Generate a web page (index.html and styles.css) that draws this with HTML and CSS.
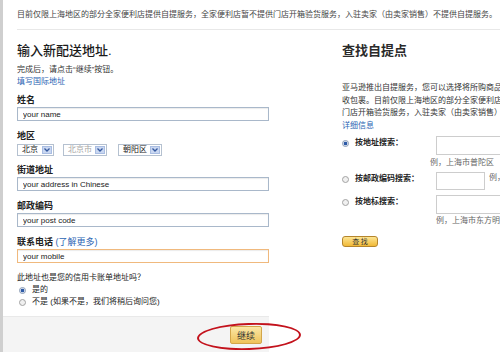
FILE: index.html
```html
<!DOCTYPE html>
<html lang="zh-CN">
  <head>
    <meta charset="UTF-8" />
    <meta name="viewport" content="width=device-width, initial-scale=1.0" />
    <title>输入新配送地址</title>
    <link rel="stylesheet" href="styles.css">
  </head>
  <body>
    <div class="page">
      <p class="notice">目前仅限上海地区的部分全家便利店提供自提服务，全家便利店暂不提供门店开箱验货服务，入驻卖家（由卖家销售）不提供自提服务。</p>

      <div class="columns">
        <!-- new address form -->
        <form class="address">
          <h2 class="title">输入新配送地址.</h2>
          <p class="address__hint">完成后，请点击“继续”按钮。</p>
          <a href="#" class="link">填写国际地址</a>

          <div class="field field--first">
            <label class="label">姓名</label>
            <input class="input" type="text" value="your name" />
          </div>

          <div class="field">
            <label class="label">地区</label>
            <div class="selects">
              <div class="select select--short">
                <span>北京</span>
                <span class="select__arrow"><svg width="6" height="4" viewBox="0 0 6 4"><path d="M0.5 0.5 L3 3 L5.5 0.5" fill="none" stroke="#34589e" stroke-width="1.3"/></svg></span>
              </div>
              <div class="select select--disabled">
                <span>北京市</span>
                <span class="select__arrow"><svg width="6" height="4" viewBox="0 0 6 4"><path d="M0.5 0.5 L3 3 L5.5 0.5" fill="none" stroke="#34589e" stroke-width="1.3"/></svg></span>
              </div>
              <div class="select">
                <span>朝阳区</span>
                <span class="select__arrow"><svg width="6" height="4" viewBox="0 0 6 4"><path d="M0.5 0.5 L3 3 L5.5 0.5" fill="none" stroke="#34589e" stroke-width="1.3"/></svg></span>
              </div>
            </div>
          </div>

          <div class="field field--after-select">
            <label class="label">街道地址</label>
            <input class="input" type="text" value="your address in Chinese" />
          </div>

          <div class="field">
            <label class="label">邮政编码</label>
            <input class="input" type="text" value="your post code" />
          </div>

          <div class="field">
            <label class="label">联系电话 <a href="#" class="link link--plain">(了解更多)</a></label>
            <input class="input input--active" type="text" value="your mobile" />
          </div>

          <p class="question">此地址也是您的信用卡账单地址吗？</p>
          <label class="choice"><input type="radio" name="billing" class="radio" checked /> 是的</label>
          <label class="choice"><input type="radio" name="billing" class="radio" /> 不是 (如果不是，我们将稍后询问您)</label>

          <div class="address__footer">
            <button type="button" class="btn-continue">继续</button>
            <span class="mark"></span>
          </div>
        </form>

        <!-- pickup point search -->
        <section class="pickup">
          <h2 class="title title--bold">查找自提点</h2>
          <p class="pickup__text">亚马逊推出自提服务，您可以选择将所购商品送至指定便利店，然后在店内自行签收包裹。目前仅限上海地区的部分全家便利店提供自提服务，全家便利店暂不提供门店开箱验货服务，入驻卖家（由卖家销售）不提供自提服务。<br /><a href="#" class="link">详细信息</a></p>

          <div class="search">
            <div class="search__row">
              <label class="search__option"><input type="radio" name="search" class="radio" checked /> 按地址搜索：</label>
              <div class="search__field">
                <input class="search__input" type="text" />
                <p class="search__example search__example--shift">例，上海市普陀区</p>
              </div>
            </div>
            <div class="search__row search__row--post">
              <label class="search__option"><input type="radio" name="search" class="radio" /> 按邮政编码搜索：</label>
              <div class="search__field search__field--inline">
                <input class="search__input search__input--short" type="text" />
                <span class="search__example">例，</span>
              </div>
            </div>
            <div class="search__row search__row--landmark">
              <label class="search__option"><input type="radio" name="search" class="radio" /> 按地标搜索：</label>
              <div class="search__field">
                <input class="search__input" type="text" />
                <p class="search__example search__example--tight">例，上海市东方明</p>
              </div>
            </div>
          </div>

          <button type="button" class="btn-find">查 找</button>
        </section>
      </div>
    </div>
  </body>
</html>
```

FILE: styles.css
```css
* {
  margin: 0;
  padding: 0;
  box-sizing: border-box;
}

html,
body {
  height: 100%;
  overflow: hidden;
}

body {
  color: #333;
  background-color: #fff;
  font-family: "Liberation Sans", "Noto Sans CJK SC", sans-serif;
  font-size: 8px;
  line-height: 12px;
}

.page {
  min-height: 100%;
  border-left: 3px solid #cfcfcf;
  padding-left: 14px;
}

.notice {
  padding-top: 9px;
  padding-bottom: 8px;
  border-bottom: 1px solid #e8e8e8;
  white-space: nowrap;
  color: #444;
}

.columns {
  display: flex;
  gap: 73px;
  margin-top: 13px;
}

.title {
  font-size: 13px;
  line-height: 16px;
  font-weight: 500;
  color: #1a1a1a;
}
.title--bold {
  font-weight: bold;
  color: #2a2a2a;
}

.link {
  color: #2b64b3;
  text-decoration: none;
}

/* ***** left column ***** */

.address {
  flex: none;
  width: 252px;
}
.address__hint {
  margin-top: 5px;
}

.field {
  margin-top: 9px;
}
.field--first {
  margin-top: 6px;
}
.field--after-select {
  margin-top: 8px;
}
.label {
  display: block;
  font-size: 9px;
  line-height: 12px;
  font-weight: bold;
  color: #222;
}
.link--plain {
  font-weight: normal;
}
.input {
  display: block;
  width: 100%;
  height: 14px;
  margin-top: 1px;
  padding: 0 5px;
  border: 1px solid #a9b8ca;
  box-shadow: inset 0 1px 1px rgba(0, 0, 0, 0.08);
  font-family: "Liberation Sans", sans-serif;
  font-size: 8px;
  color: #222;
  outline: none;
}
.input--active {
  border-color: #f0b97d;
}

.selects {
  display: flex;
  margin-top: 2px;
}
.select {
  display: flex;
  align-items: center;
  justify-content: space-between;
  width: 44px;
  height: 12px;
  margin-right: 11px;
  padding: 0 1px 0 4px;
  border: 1px solid #b5c1d0;
  color: #222;
}
.select--short {
  width: 37px;
  margin-right: 9px;
}
.select--disabled {
  color: #a6a6a6;
}
.select__arrow {
  display: flex;
  align-items: center;
  justify-content: center;
  width: 10px;
  height: 8px;
  background-color: #c9d7f1;
  border: 1px solid #a9bde2;
}

.question {
  margin-top: 9px;
  color: #222;
}
.choice {
  display: flex;
  align-items: center;
  gap: 6px;
  padding-left: 2px;
  color: #222;
}
.radio {
  appearance: none;
  flex: none;
  width: 7px;
  height: 7px;
  border: 1px solid #a3a3a3;
  border-radius: 50%;
  background-color: #f0f0f0;
}
.radio:checked {
  border-color: #8a9bb5;
  background: radial-gradient(circle, #2d5aa6 0 1.6px, #e6ecf6 2.1px);
}

.address__footer {
  position: relative;
  display: flex;
  justify-content: flex-end;
  align-items: flex-start;
  height: 40px;
  margin-top: 8px;
  margin-left: -14px;
  padding: 9px 7px 0 0;
  background-color: #f4f4f4;
  border-top: 1px solid #e9e9e9;
}
.btn-continue {
  width: 32px;
  height: 18px;
  border: 1px solid #d3a64a;
  border-radius: 2px;
  background: linear-gradient(#fbe7a6, #efc35a);
  font-family: "Noto Sans CJK SC", sans-serif;
  font-size: 9px;
  color: #333;
}
.mark {
  position: absolute;
  left: 194px;
  top: 6px;
  width: 104px;
  height: 27px;
  border: 2px solid #c3121c;
  border-radius: 50%;
  transform: rotate(-2deg);
  pointer-events: none;
}

/* ***** right column ***** */

.pickup {
  flex: none;
  width: 290px;
}
.pickup__text {
  margin-top: 23px;
  line-height: 12.5px;
  color: #333;
}

.search {
  margin-top: 4px;
}
.search__row {
  display: flex;
}
.search__row--post {
  margin-top: 3px;
}
.search__row--landmark {
  margin-top: 5px;
}
.search__option {
  display: flex;
  align-items: center;
  gap: 6px;
  flex: none;
  width: 94px;
  height: 12px;
  margin-top: 1px;
  font-weight: bold;
  color: #222;
}
.search__field--inline {
  display: flex;
  gap: 4px;
}
.search__input {
  display: block;
  width: 150px;
  height: 19px;
  border: 1px solid #cdcdcd;
  outline: none;
}
.search__input--short {
  width: 49px;
  height: 18px;
}
.search__example {
  margin-top: 2px;
  color: #666;
  white-space: nowrap;
}
.search__field--inline .search__example {
  margin-top: 0;
}
.search__example--shift {
  margin-left: -6px;
}
.search__example--tight {
  margin-top: 1px;
}

.btn-find {
  display: block;
  width: 36px;
  height: 11px;
  margin-top: 9px;
  border: 1px solid #b5852c;
  border-radius: 3px;
  background: linear-gradient(#fde593, #f1b936);
  font-family: "Noto Sans CJK SC", sans-serif;
  font-size: 7px;
  line-height: 9px;
  color: #333;
}
```
